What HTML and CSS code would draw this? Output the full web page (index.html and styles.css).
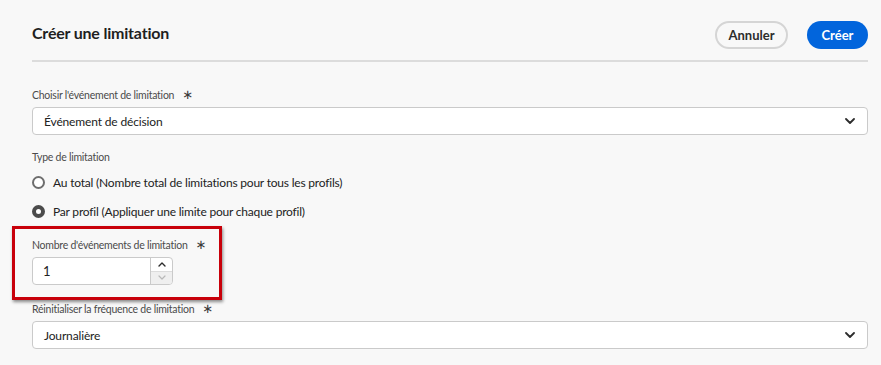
FILE: index.html
```html
<!DOCTYPE html>
<html lang="fr">
<head>
    <meta charset="UTF-8">
    <title>Créer une limitation</title>
    <link rel="stylesheet" href="styles.css">
</head>
<body>
    <div class="dialog">
        <div class="header">
            <h1>Créer une limitation</h1>
            <div class="actions">
                <button class="btn btn-secondary">Annuler</button>
                <button class="btn btn-primary">Créer</button>
            </div>
        </div>

        <div class="field">
            <label class="label">Choisir l'événement de limitation <span class="req">∗</span></label>
            <div class="select">
                <span>Événement de décision</span>
                <svg class="chevron" width="10" height="6" viewBox="0 0 10 6"><path d="M1 1l4 4 4-4" fill="none" stroke="#2c2c2c" stroke-width="1.8" stroke-linecap="round" stroke-linejoin="round"/></svg>
            </div>
        </div>

        <div class="field">
            <label class="label">Type de limitation</label>
            <div class="radios">
                <div class="radio"><span class="dot"></span>Au total (Nombre total de limitations pour tous les profils)</div>
                <div class="radio"><span class="dot checked"></span>Par profil (Appliquer une limite pour chaque profil)</div>
            </div>
        </div>

        <div class="highlight">
            <label class="label">Nombre d'événements de limitation <span class="req">∗</span></label>
            <div class="number">
                <span class="value">1</span>
                <div class="stepper">
                    <div class="step">
                        <svg width="8" height="5" viewBox="0 0 8 5"><path d="M1 4l3-3 3 3" fill="none" stroke="#2c2c2c" stroke-width="1.4" stroke-linecap="round" stroke-linejoin="round"/></svg>
                    </div>
                    <div class="step disabled">
                        <svg width="8" height="5" viewBox="0 0 8 5"><path d="M1 1l3 3 3-3" fill="none" stroke="#b8b8b8" stroke-width="1.2" stroke-linecap="round" stroke-linejoin="round"/></svg>
                    </div>
                </div>
            </div>
        </div>

        <div class="field">
            <label class="label">Réinitialiser la fréquence de limitation <span class="req">∗</span></label>
            <div class="select">
                <span>Journalière</span>
                <svg class="chevron" width="10" height="6" viewBox="0 0 10 6"><path d="M1 1l4 4 4-4" fill="none" stroke="#2c2c2c" stroke-width="1.8" stroke-linecap="round" stroke-linejoin="round"/></svg>
            </div>
        </div>
    </div>
</body>
</html>
```

FILE: styles.css
```css
body {
    margin: 0;
    background-color: #f8f8f8;
    font-family: "Lato", "Open Sans", sans-serif;
    color: #222;
}

.dialog {
    padding: 21px 13px 0 32px;
}

.header {
    display: flex;
    justify-content: space-between;
    align-items: flex-start;
    height: 28px;
    padding-bottom: 11px;
    border-bottom: 2px solid #dcdcdc;
}

h1 {
    margin: 2px 0 0;
    font-size: 16px;
    line-height: 20px;
    font-weight: 700;
    letter-spacing: -0.2px;
    color: #1f1f1f;
}

.actions {
    display: flex;
    gap: 19px;
}

.btn {
    height: 28px;
    border-radius: 14px;
    font-family: inherit;
    font-size: 13px;
    font-weight: 700;
    padding: 0;
    cursor: pointer;
}

.btn-secondary {
    width: 73px;
    background-color: #f8f8f8;
    border: 2px solid #d5d5d5;
    color: #2c2c2c;
}

.btn-primary {
    width: 61px;
    background-color: #0265dc;
    border: none;
    color: #fff;
}

.label {
    display: flex;
    align-items: center;
    font-size: 10.5px;
    letter-spacing: -0.25px;
    color: #4b4b4b;
    height: 14px;
    line-height: 14px;
    white-space: nowrap;
}

.req {
    margin-left: 8px;
    font-family: "DejaVu Sans", sans-serif;
    font-size: 13px;
    letter-spacing: 0;
    color: #3a3a3a;
}

.dialog > .field:nth-child(2) {
    padding-top: 26px;
}

.field .label {
    margin-bottom: 5px;
}

.select {
    display: flex;
    justify-content: space-between;
    align-items: center;
    height: 26px;
    border: 1px solid #cacaca;
    border-radius: 4px;
    background-color: #fff;
    padding: 0 12px 0 11px;
    font-size: 12px;
    letter-spacing: -0.15px;
    color: #222;
}

.dialog > .field:nth-child(3) {
    padding-top: 15px;
}

.radios {
    display: flex;
    flex-direction: column;
    gap: 15px;
    padding-top: 6px;
}

.radio {
    display: flex;
    align-items: center;
    height: 14px;
    font-size: 12px;
    letter-spacing: -0.2px;
    color: #222;
}

.dot {
    box-sizing: border-box;
    width: 13px;
    height: 13px;
    border: 2px solid #6e6e6e;
    border-radius: 50%;
    margin-right: 8px;
    background-color: #fff;
}

.dot.checked {
    border: 4px solid #4b4b4b;
}

.highlight {
    margin: 8px 0 0 -20px;
    width: 170px;
    padding: 9px 17px 12px;
    border: 3px solid #c8000a;
    box-shadow: 1px 2px 3px rgba(0, 0, 0, 0.45);
}

.highlight .label {
    margin-bottom: 5px;
}

.number {
    display: flex;
    width: 141px;
    height: 28px;
    box-sizing: border-box;
    border: 1px solid #cacaca;
    border-radius: 4px;
    background-color: #fff;
    overflow: hidden;
}

.value {
    flex: 1;
    padding-left: 10px;
    font-size: 13px;
    line-height: 26px;
}

.stepper {
    width: 21px;
    display: flex;
    flex-direction: column;
    border-left: 1px solid #cacaca;
}

.step {
    flex: 1;
    display: flex;
    align-items: center;
    justify-content: center;
}

.step.disabled {
    background-color: #efefef;
    border-top: 1px solid #dcdcdc;
}

.dialog > .field:last-child {
    padding-top: 2px;
}
```
